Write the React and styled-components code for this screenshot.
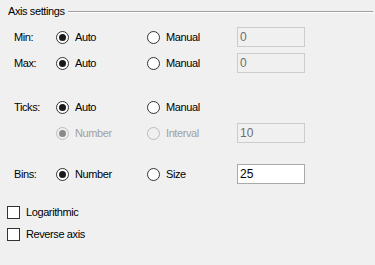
import React from "react";
import styled, { createGlobalStyle } from "styled-components";

const Global = createGlobalStyle`
  html, body { margin: 0; padding: 0; background: #f0f0f0; }
  body { font-family: "Liberation Sans", Arial, sans-serif; font-size: 11px; letter-spacing: -0.4px; color: #000; }
`;

const Page = styled.div`
  width: 375px;
  height: 265px;
  background: #f0f0f0;
  overflow: hidden;
`;

const Header = styled.div`
  display: flex;
  align-items: flex-start;
  padding: 4px 2px 0 8px;
  height: 14px;
`;

const Legend = styled.span`
  line-height: 14px;
  white-space: nowrap;
`;

const Rule = styled.div`
  flex: 1;
  margin: 7px 0 0 3px;
  border-top: 1px solid #a0a0a0;
  border-bottom: 1px solid #ffffff;
`;

const Rows = styled.div`
  display: flex;
  flex-direction: column;
  margin-top: 6px;
`;

const Row = styled.div`
  display: grid;
  grid-template-columns: 42px 91px 90px 68px;
  align-items: center;
  height: 26px;
  padding-left: 14px;
  margin-top: ${(p) => p.$gap || 0}px;
`;

const Label = styled.span`
  line-height: 14px;
`;

const RadioWrap = styled.label`
  display: flex;
  align-items: center;
  gap: 6px;
  color: ${(p) => (p.$disabled ? "#a0a0a0" : "#000")};
  line-height: 14px;
`;

const Circle = styled.span`
  box-sizing: border-box;
  width: 13px;
  height: 13px;
  border-radius: 50%;
  border: 1px solid ${(p) => (p.$disabled ? "#bcbcbc" : "#333333")};
  background: ${(p) => (p.$disabled ? "#f0f0f0" : "#ffffff")};
  display: flex;
  align-items: center;
  justify-content: center;
  flex: none;
  &::after {
    content: "";
    display: ${(p) => (p.$checked ? "block" : "none")};
    width: 7px;
    height: 7px;
    border-radius: 50%;
    background: ${(p) => (p.$disabled ? "#8a8a8a" : "#1a1a1a")};
  }
`;

const Field = styled.div`
  box-sizing: border-box;
  width: 68px;
  height: 20px;
  border: 1px solid ${(p) => (p.$disabled ? "#cccccc" : "#a9a9a9")};
  background: ${(p) => (p.$disabled ? "#f0f0f0" : "#ffffff")};
  color: ${(p) => (p.$disabled ? "#6d6d6d" : "#000")};
  padding: 2px 2px;
  line-height: 14px;
  font-size: 12px;
  letter-spacing: 0;
`;

const Checks = styled.div`
  display: flex;
  flex-direction: column;
  margin-top: 15px;
  padding-left: 7px;
`;

const CheckRow = styled.label`
  display: flex;
  align-items: flex-start;
  gap: 6px;
  height: 22px;
`;

const Box = styled.span`
  box-sizing: border-box;
  width: 13px;
  height: 13px;
  margin-top: 4px;
  border: 1px solid #333333;
  background: #ffffff;
  flex: none;
`;

const CheckText = styled.span`
  line-height: 14px;
  margin-top: 3px;
`;

function Radio({ checked, disabled, children }) {
  return (
    <RadioWrap $disabled={disabled}>
      <Circle $checked={checked} $disabled={disabled} />
      <span>{children}</span>
    </RadioWrap>
  );
}

function Check({ children }) {
  return (
    <CheckRow>
      <Box />
      <CheckText>{children}</CheckText>
    </CheckRow>
  );
}

export default function App() {
  return (
    <Page>
      <Global />
      <Header>
        <Legend>Axis settings</Legend>
        <Rule />
      </Header>
      <Rows>
        <Row>
          <Label>Min:</Label>
          <Radio checked>Auto</Radio>
          <Radio>Manual</Radio>
          <Field $disabled>0</Field>
        </Row>
        <Row>
          <Label>Max:</Label>
          <Radio checked>Auto</Radio>
          <Radio>Manual</Radio>
          <Field $disabled>0</Field>
        </Row>
        <Row $gap={18}>
          <Label>Ticks:</Label>
          <Radio checked>Auto</Radio>
          <Radio>Manual</Radio>
          <span />
        </Row>
        <Row>
          <span />
          <Radio checked disabled>Number</Radio>
          <Radio disabled>Interval</Radio>
          <Field $disabled>10</Field>
        </Row>
        <Row $gap={15}>
          <Label>Bins:</Label>
          <Radio checked>Number</Radio>
          <Radio>Size</Radio>
          <Field>25</Field>
        </Row>
      </Rows>
      <Checks>
        <Check>Logarithmic</Check>
        <Check>Reverse axis</Check>
      </Checks>
    </Page>
  );
}
